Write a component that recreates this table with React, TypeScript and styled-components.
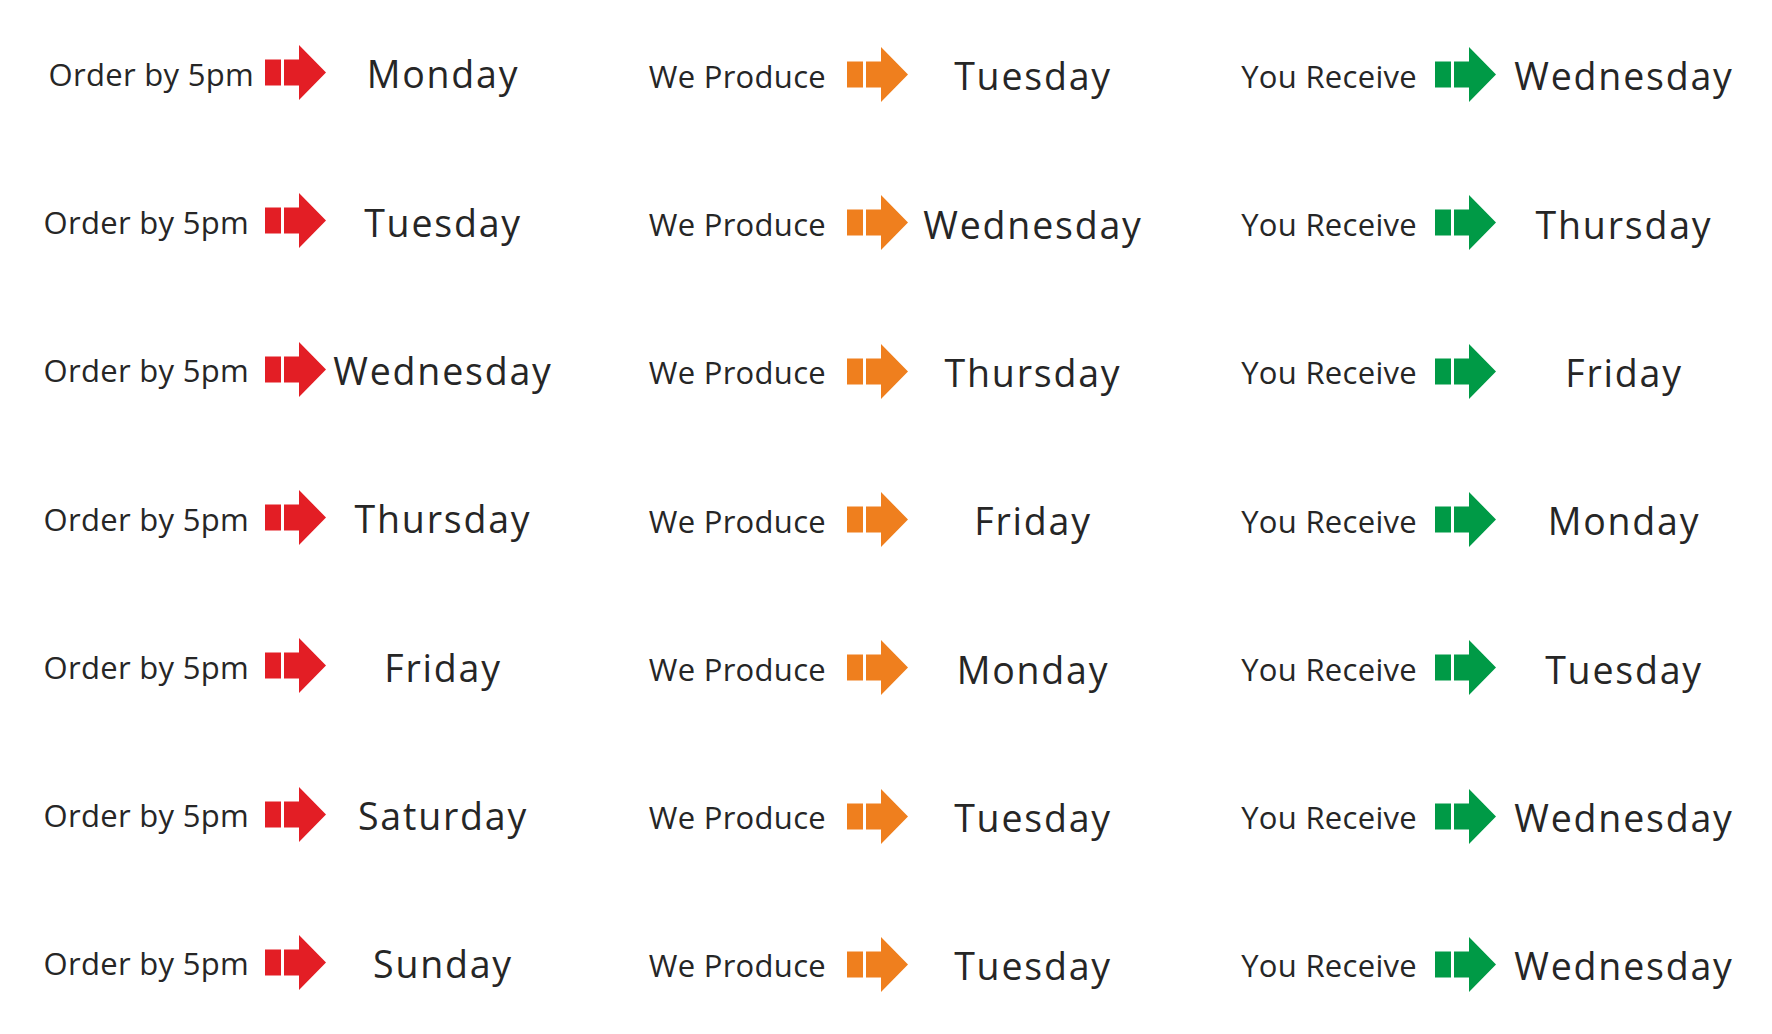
import React from "react";
import styled, { createGlobalStyle } from "styled-components";

const GlobalStyle = createGlobalStyle`
  html, body {
    margin: 0;
    padding: 0;
    background-color: #ffffff;
  }
  body {
    font-family: "Open Sans", "Liberation Sans", sans-serif;
    color: #262626;
  }
`;

type Step = {
  label: string;
  color: string;
  labelWidth: number;
  gap: number;
  dayWidth: number;
  offset: number;
  days: string[];
};

// label box width includes the gap before the arrow
const steps: Step[] = [
  {
    label: "Order by 5pm",
    color: "#e31e25",
    labelWidth: 265,
    gap: 16,
    dayWidth: 234,
    offset: 0,
    days: ["Monday", "Tuesday", "Wednesday", "Thursday", "Friday", "Saturday", "Sunday"],
  },
  {
    label: "We Produce",
    color: "#ef7f1e",
    labelWidth: 287,
    gap: 21,
    dayWidth: 250,
    offset: 2,
    days: ["Tuesday", "Wednesday", "Thursday", "Friday", "Monday", "Tuesday", "Tuesday"],
  },
  {
    label: "You Receive",
    color: "#009a46",
    labelWidth: 277,
    gap: 18,
    dayWidth: 256,
    offset: 2,
    days: ["Wednesday", "Thursday", "Friday", "Monday", "Tuesday", "Wednesday", "Wednesday"],
  },
];

const Page = styled.div`
  display: grid;
  grid-template-columns: repeat(3, max-content);
  align-items: start;
  width: 1772px;
  height: 1034px;
  overflow: hidden;
`;

const Column = styled.div<{ $offset: number }>`
  display: grid;
  grid-auto-rows: 148.3px;
  padding-top: ${(p) => p.$offset}px;
`;

const Row = styled.div`
  display: flex;
  align-items: center;
  padding-bottom: 3px;
  box-sizing: border-box;
`;

const Label = styled.div<{ $width: number; $gap: number }>`
  flex: none;
  width: ${(p) => p.$width}px;
  padding-right: ${(p) => p.$gap}px;
  box-sizing: border-box;
  text-align: right;
  font-size: 31px;
  line-height: 1;
  letter-spacing: 0.3px;
  white-space: nowrap;
  padding-top: 3px;
`;

const Day = styled.div<{ $width: number }>`
  flex: none;
  width: ${(p) => p.$width}px;
  text-align: center;
  font-size: 37.5px;
  line-height: 1;
  letter-spacing: 1.8px;
  white-space: nowrap;
  padding-top: 3px;
`;

const ArrowIcon = ({ color }: { color: string }) => (
  <svg width="61" height="55" viewBox="0 0 61 55" style={{ flex: "none", display: "block" }}>
    <rect x="0" y="14.5" width="16" height="26" fill={color} />
    <path d="M19 14.5 H34 V0 L61 27.5 L34 55 V40.5 H19 Z" fill={color} />
  </svg>
);

export default function App() {
  return (
    <>
      <GlobalStyle />
      <Page>
        {steps.map((step) => (
          <Column key={step.label} $offset={step.offset}>
            {step.days.map((day, i) => (
              <Row key={i}>
                <Label $width={step.labelWidth} $gap={step.label === "Order by 5pm" && i === 0 ? 11 : step.gap}>
                  {step.label}
                </Label>
                <ArrowIcon color={step.color} />
                <Day $width={step.dayWidth}>{day}</Day>
              </Row>
            ))}
          </Column>
        ))}
      </Page>
    </>
  );
}
